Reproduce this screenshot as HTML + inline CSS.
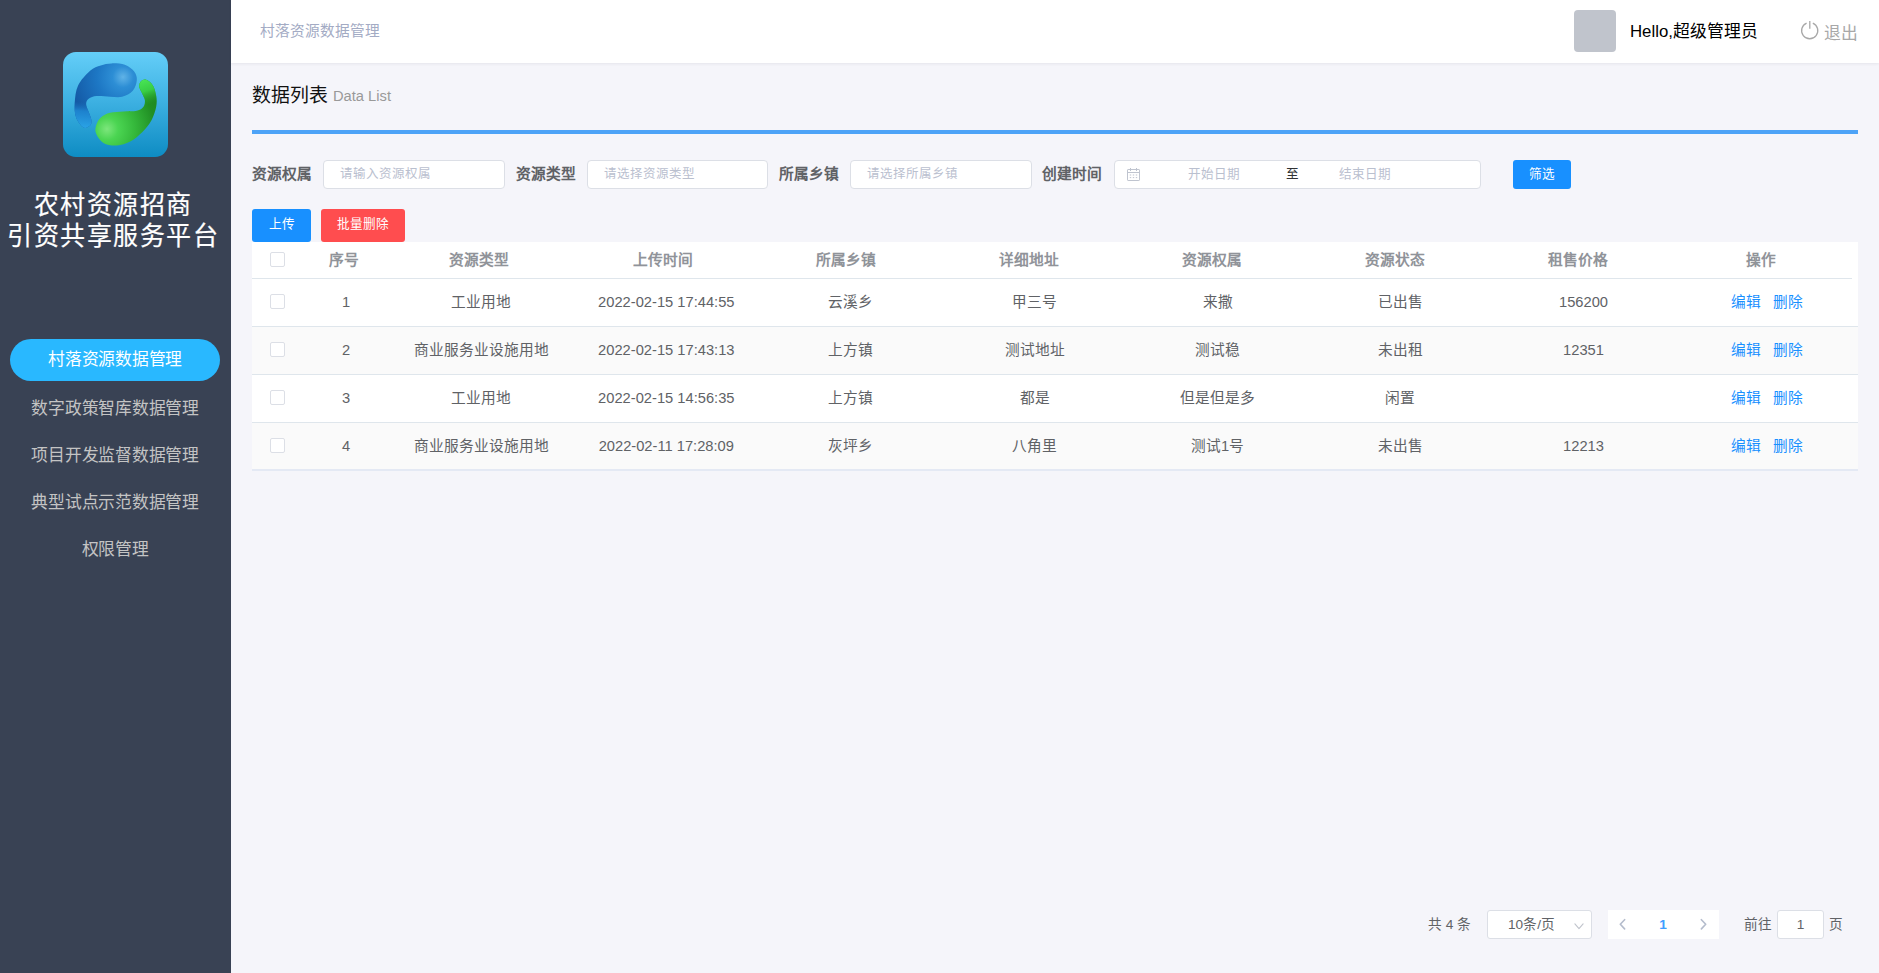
<!DOCTYPE html>
<html lang="zh-CN">
<head>
<meta charset="utf-8">
<title>农村资源招商引资共享服务平台</title>
<style>
*{box-sizing:border-box;}
html,body{margin:0;padding:0;}
body{width:1879px;height:973px;overflow:hidden;background:#f5f5fa;font-family:"Liberation Sans",sans-serif;color:#606266;position:relative;font-size:14.7px;}
.abs{position:absolute;white-space:nowrap;}

/* ---------- sidebar ---------- */
#side{position:absolute;left:0;top:0;width:231px;height:973px;background:#394254;}
#logo{position:absolute;left:63px;top:52px;width:105px;height:105px;}
.ttl{position:absolute;left:0;width:226px;text-align:center;color:#fff;font-size:25px;line-height:30px;letter-spacing:1.5px;white-space:nowrap;-webkit-text-stroke:.2px #fff;transform:scaleY(1.04);transform-origin:50% 55%;}
.mi{position:absolute;left:10px;width:210px;height:42px;line-height:42px;text-align:center;font-size:16.8px;letter-spacing:-.25px;color:#c4c4c4;white-space:nowrap;border-radius:21px;}
.mi.on{background:#29b8ff;color:#fff;}

/* ---------- header ---------- */
#head{position:absolute;left:231px;top:0;width:1648px;height:63px;background:#fff;box-shadow:0 1px 3px rgba(0,21,41,.07);}
#crumb{left:29px;top:0;line-height:62px;font-size:14.7px;color:#a3abc4;}
#avatar{left:1343px;top:10px;width:42px;height:42px;border-radius:4px;background:#c0c4cc;}
#hello{left:1399px;top:0;line-height:64px;font-size:16.8px;color:#000;}
#exit{left:1593px;top:0;line-height:67px;font-size:16.8px;color:#a8a8a8;}
#pwr{left:1569px;top:20px;width:20px;height:21px;}

/* ---------- title ---------- */
#h3{left:252px;top:83px;font-size:18.9px;line-height:26px;color:#111;}
#h3 span{font-size:14.7px;color:#999;margin-left:5px;position:relative;top:-1px;}
#bar{left:252px;top:130px;width:1606px;height:4px;background:#4da3f7;}

/* ---------- filter ---------- */
.lbl{top:160px;line-height:28px;font-size:14.7px;font-weight:bold;color:#606266;}
.inp{top:160px;height:29px;background:#fff;border:1px solid #dcdfe6;border-radius:4px;line-height:27px;font-size:12.5px;color:#bac0cf;padding-left:16px;}
.btn{color:#fff;font-size:12.6px;text-align:center;border-radius:3px;}
#cal{left:1126px;top:167px;width:15px;height:15px;}

/* ---------- table ---------- */
#tbl{left:252px;top:242px;width:1606px;height:229px;background:#fff;}
.row{position:absolute;left:0;width:1606px;height:48px;border-bottom:1px solid #dfe6ec;background:#fff;}
.row.st{background:#fafafa;}
#thead{position:absolute;left:0;top:0;width:1600px;height:37px;border-bottom:1px solid #dfe6ec;}
.c{position:absolute;top:0;text-align:center;white-space:nowrap;font-size:14.7px;color:#606266;}
.row .c{line-height:46px;}
#thead .c{line-height:36px;font-weight:bold;color:#909399;}
.ck{position:absolute;left:18px;width:15px;height:15px;border:1px solid #dcdfe6;border-radius:2px;background:#fff;}
.lk{color:#1890ff;}
.lk+.lk{margin-left:12px;}

/* ---------- pagination ---------- */
.pg{top:910px;height:29px;line-height:29px;font-size:13.65px;color:#606266;}
.pbox{background:#fff;border:1px solid #dcdfe6;border-radius:3px;line-height:27px;text-align:center;}
.chev{fill:none;stroke:#c0c4cc;stroke-width:1.3;stroke-linecap:round;stroke-linejoin:round;}
</style>
</head>
<body>

<!-- sidebar -->
<div id="side">
  <svg id="logo" viewBox="0 0 105 105">
    <defs>
      <linearGradient id="lg" x1="0" y1="0" x2="0" y2="1">
        <stop offset="0" stop-color="#64cef8"/>
        <stop offset=".45" stop-color="#3fb2e3"/>
        <stop offset="1" stop-color="#0e8cc3"/>
      </linearGradient>
      <radialGradient id="gb" gradientUnits="userSpaceOnUse" cx="60" cy="25" r="52">
        <stop offset="0" stop-color="#60b3e7"/>
        <stop offset=".2" stop-color="#2d8ed5"/>
        <stop offset=".5" stop-color="#1d77c4"/>
        <stop offset="1" stop-color="#145aa6"/>
      </radialGradient>
      <linearGradient id="gbt" gradientUnits="userSpaceOnUse" x1="22" y1="50" x2="20" y2="76">
        <stop offset="0" stop-color="#1a6fbb" stop-opacity="0"/>
        <stop offset=".35" stop-color="#1e86d2" stop-opacity=".9"/>
        <stop offset="1" stop-color="#2aa4e6"/>
      </linearGradient>
      <radialGradient id="gg" gradientUnits="userSpaceOnUse" cx="44" cy="77" r="56">
        <stop offset="0" stop-color="#7de67c"/>
        <stop offset=".2" stop-color="#4bd552"/>
        <stop offset=".5" stop-color="#35b83b"/>
        <stop offset=".85" stop-color="#218f24"/>
        <stop offset="1" stop-color="#1f8a22"/>
      </radialGradient>
      <linearGradient id="ggt" gradientUnits="userSpaceOnUse" x1="80" y1="28" x2="88" y2="52">
        <stop offset="0" stop-color="#48e455"/>
        <stop offset=".45" stop-color="#3dd94a" stop-opacity=".85"/>
        <stop offset="1" stop-color="#2aa52e" stop-opacity="0"/>
      </linearGradient>
      <clipPath id="cb"><path d="M48.5 11.4C52.5 11.3 58.0 11.4 61.8 12.7C65.6 14.1 69.2 16.8 71.2 19.4C73.2 22.0 74.1 24.9 73.8 28.1C73.6 31.3 72.3 36.0 69.8 38.8C67.4 41.6 62.9 43.8 59.1 44.8C55.4 45.8 51.4 44.9 47.1 44.8C42.9 44.7 37.3 43.8 33.8 44.1C30.2 44.4 27.5 45.4 25.7 46.8C24.0 48.1 23.1 49.9 23.1 52.1C23.1 54.4 24.9 57.5 25.7 60.1C26.6 62.8 28.2 65.9 28.4 68.2C28.6 70.4 28.4 72.3 27.1 73.5C25.7 74.7 22.7 76.8 20.4 75.5C18.1 74.2 14.5 69.6 13.1 65.5C11.6 61.4 11.4 56.1 11.7 50.8C12.1 45.4 12.5 38.8 15.1 33.4C17.6 28.1 23.3 22.1 27.1 18.7C30.9 15.4 34.2 14.6 37.8 13.4C41.3 12.2 44.4 11.5 48.5 11.4Z"/></clipPath>
      <clipPath id="cg"><path d="M83.2 27.8C85.2 28.5 88.2 30.7 89.9 33.4C91.5 36.1 92.7 40.5 93.2 44.1C93.8 47.7 94.0 50.8 93.2 54.8C92.4 58.8 90.9 63.9 88.5 68.2C86.2 72.4 82.7 76.6 79.2 80.2C75.6 83.7 71.4 87.3 67.2 89.5C62.9 91.8 58.3 93.3 53.8 93.5C49.3 93.8 43.9 92.9 40.4 90.9C37.0 88.9 34.3 84.4 33.1 81.5C31.9 78.6 32.3 76.2 33.1 73.5C33.9 70.8 35.4 67.6 37.8 65.5C40.1 63.4 43.3 61.8 47.1 60.8C50.9 59.8 56.0 59.8 60.5 59.5C64.9 59.1 70.5 59.6 73.8 58.8C77.2 58.0 79.2 56.6 80.5 54.8C81.9 53.0 82.1 50.3 81.9 48.1C81.6 45.9 80.1 43.7 79.2 41.4C78.2 39.2 76.5 36.8 76.2 34.8C76.0 32.8 76.7 30.6 77.8 29.4C79.0 28.3 81.2 27.1 83.2 27.8Z"/></clipPath>
    </defs>
    <rect x="0" y="0" width="105" height="105" rx="13" ry="13" fill="url(#lg)"/>
    <path d="M48.5 11.4C52.5 11.3 58.0 11.4 61.8 12.7C65.6 14.1 69.2 16.8 71.2 19.4C73.2 22.0 74.1 24.9 73.8 28.1C73.6 31.3 72.3 36.0 69.8 38.8C67.4 41.6 62.9 43.8 59.1 44.8C55.4 45.8 51.4 44.9 47.1 44.8C42.9 44.7 37.3 43.8 33.8 44.1C30.2 44.4 27.5 45.4 25.7 46.8C24.0 48.1 23.1 49.9 23.1 52.1C23.1 54.4 24.9 57.5 25.7 60.1C26.6 62.8 28.2 65.9 28.4 68.2C28.6 70.4 28.4 72.3 27.1 73.5C25.7 74.7 22.7 76.8 20.4 75.5C18.1 74.2 14.5 69.6 13.1 65.5C11.6 61.4 11.4 56.1 11.7 50.8C12.1 45.4 12.5 38.8 15.1 33.4C17.6 28.1 23.3 22.1 27.1 18.7C30.9 15.4 34.2 14.6 37.8 13.4C41.3 12.2 44.4 11.5 48.5 11.4Z" fill="url(#gb)"/>
    <rect clip-path="url(#cb)" x="8" y="48" width="24" height="30" fill="url(#gbt)"/>
    <path d="M83.2 27.8C85.2 28.5 88.2 30.7 89.9 33.4C91.5 36.1 92.7 40.5 93.2 44.1C93.8 47.7 94.0 50.8 93.2 54.8C92.4 58.8 90.9 63.9 88.5 68.2C86.2 72.4 82.7 76.6 79.2 80.2C75.6 83.7 71.4 87.3 67.2 89.5C62.9 91.8 58.3 93.3 53.8 93.5C49.3 93.8 43.9 92.9 40.4 90.9C37.0 88.9 34.3 84.4 33.1 81.5C31.9 78.6 32.3 76.2 33.1 73.5C33.9 70.8 35.4 67.6 37.8 65.5C40.1 63.4 43.3 61.8 47.1 60.8C50.9 59.8 56.0 59.8 60.5 59.5C64.9 59.1 70.5 59.6 73.8 58.8C77.2 58.0 79.2 56.6 80.5 54.8C81.9 53.0 82.1 50.3 81.9 48.1C81.6 45.9 80.1 43.7 79.2 41.4C78.2 39.2 76.5 36.8 76.2 34.8C76.0 32.8 76.7 30.6 77.8 29.4C79.0 28.3 81.2 27.1 83.2 27.8Z" fill="url(#gg)"/>
    <rect clip-path="url(#cg)" x="74" y="26" width="22" height="30" fill="url(#ggt)"/>
  </svg>
  <div class="ttl" style="top:190px;">农村资源招商</div>
  <div class="ttl" style="top:221px;">引资共享服务平台</div>

  <div class="mi on" style="top:339px;">村落资源数据管理</div>
  <div class="mi" style="top:387.5px;">数字政策智库数据管理</div>
  <div class="mi" style="top:434.5px;">项目开发监督数据管理</div>
  <div class="mi" style="top:481.5px;">典型试点示范数据管理</div>
  <div class="mi" style="top:528.5px;">权限管理</div>
</div>

<!-- header -->
<div id="head">
  <div id="crumb" class="abs">村落资源数据管理</div>
  <div id="avatar" class="abs"></div>
  <div id="hello" class="abs">Hello,超级管理员</div>
  <svg id="pwr" class="abs" viewBox="0 0 20 21" fill="none" stroke="#a8a8a8" stroke-width="1.3">
    <path d="M6.6 3.15A8.1 8.1 0 1 0 12.8 3.15"/>
    <path d="M9.8 1V8.8"/>
  </svg>
  <div id="exit" class="abs">退出</div>
</div>

<!-- title -->
<div id="h3" class="abs">数据列表<span>Data List</span></div>
<div id="bar" class="abs"></div>

<!-- filter -->
<div class="abs lbl" style="left:252px;">资源权属</div>
<div class="abs inp" style="left:323px;width:182px;">请输入资源权属</div>
<div class="abs lbl" style="left:516px;">资源类型</div>
<div class="abs inp" style="left:587px;width:181px;">请选择资源类型</div>
<div class="abs lbl" style="left:779px;">所属乡镇</div>
<div class="abs inp" style="left:850px;width:182px;">请选择所属乡镇</div>
<div class="abs lbl" style="left:1042px;">创建时间</div>
<div class="abs inp" style="left:1114px;width:367px;padding-left:0;font-size:12.6px;">
  <span class="abs" style="left:73px;top:0;">开始日期</span>
  <span class="abs" style="left:171px;top:0;color:#303133;">至</span>
  <span class="abs" style="left:224px;top:0;">结束日期</span>
</div>
<svg id="cal" class="abs" viewBox="0 0 15 15" fill="none" stroke="#bfc4cf" stroke-width="1">
  <rect x="1.5" y="2.5" width="12" height="11" rx=".6"/>
  <path d="M1.5 5.5H13.5M4.5 1V4M10.5 1V4M3.8 8H5.2M6.8 8H8.2M9.8 8H11.2M3.8 10.6H5.2M6.8 10.6H8.2M9.8 10.6H11.2"/>
</svg>
<div class="abs btn" style="left:1513px;top:160px;width:58px;height:29px;line-height:28px;background:#1890ff;">筛选</div>
<div class="abs btn" style="left:252px;top:209px;width:59px;height:33px;line-height:31px;background:#1890ff;">上传</div>
<div class="abs btn" style="left:321px;top:209px;width:84px;height:33px;line-height:31px;background:#ff4d4f;">批量删除</div>

<!-- table -->
<div id="tbl" class="abs">
 <div id="thead">
  <i class="ck" style="top:10px;"></i>
  <div class="c" style="left:52.1px;width:80px;">序号</div>
  <div class="c" style="left:146.6px;width:160px;">资源类型</div>
  <div class="c" style="left:330.75px;width:160px;">上传时间</div>
  <div class="c" style="left:513.8px;width:160px;">所属乡镇</div>
  <div class="c" style="left:696.8px;width:160px;">详细地址</div>
  <div class="c" style="left:879.5px;width:160px;">资源权属</div>
  <div class="c" style="left:1062.7px;width:160px;">资源状态</div>
  <div class="c" style="left:1245.9px;width:160px;">租售价格</div>
  <div class="c" style="left:1428.9px;width:160px;">操作</div>
 </div>
 <div class="row" style="top:37px;">
  <i class="ck" style="top:15px;"></i>
  <div class="c" style="left:54px;width:80px;">1</div>
  <div class="c" style="left:139.1px;width:180px;">工业用地</div>
  <div class="c" style="left:324.3px;width:180px;">2022-02-15 17:44:55</div>
  <div class="c" style="left:508.2px;width:180px;">云溪乡</div>
  <div class="c" style="left:692.5px;width:180px;">甲三号</div>
  <div class="c" style="left:875.6px;width:180px;">来撒</div>
  <div class="c" style="left:1058.2px;width:180px;">已出售</div>
  <div class="c" style="left:1241.5px;width:180px;">156200</div>
  <div class="c" style="left:1424.9px;width:180px;"><span class="lk">编辑</span><span class="lk">删除</span></div>
 </div>
 <div class="row st" style="top:85px;">
  <i class="ck" style="top:15px;"></i>
  <div class="c" style="left:54px;width:80px;">2</div>
  <div class="c" style="left:139.1px;width:180px;">商业服务业设施用地</div>
  <div class="c" style="left:324.3px;width:180px;">2022-02-15 17:43:13</div>
  <div class="c" style="left:508.2px;width:180px;">上方镇</div>
  <div class="c" style="left:692.5px;width:180px;">测试地址</div>
  <div class="c" style="left:875.6px;width:180px;">测试稳</div>
  <div class="c" style="left:1058.2px;width:180px;">未出租</div>
  <div class="c" style="left:1241.5px;width:180px;">12351</div>
  <div class="c" style="left:1424.9px;width:180px;"><span class="lk">编辑</span><span class="lk">删除</span></div>
 </div>
 <div class="row" style="top:133px;">
  <i class="ck" style="top:15px;"></i>
  <div class="c" style="left:54px;width:80px;">3</div>
  <div class="c" style="left:139.1px;width:180px;">工业用地</div>
  <div class="c" style="left:324.3px;width:180px;">2022-02-15 14:56:35</div>
  <div class="c" style="left:508.2px;width:180px;">上方镇</div>
  <div class="c" style="left:692.5px;width:180px;">都是</div>
  <div class="c" style="left:875.6px;width:180px;">但是但是多</div>
  <div class="c" style="left:1058.2px;width:180px;">闲置</div>
  <div class="c" style="left:1241.5px;width:180px;"></div>
  <div class="c" style="left:1424.9px;width:180px;"><span class="lk">编辑</span><span class="lk">删除</span></div>
 </div>
 <div class="row st" style="top:181px;">
  <i class="ck" style="top:15px;"></i>
  <div class="c" style="left:54px;width:80px;">4</div>
  <div class="c" style="left:139.1px;width:180px;">商业服务业设施用地</div>
  <div class="c" style="left:324.3px;width:180px;">2022-02-11 17:28:09</div>
  <div class="c" style="left:508.2px;width:180px;">灰坪乡</div>
  <div class="c" style="left:692.5px;width:180px;">八角里</div>
  <div class="c" style="left:875.6px;width:180px;">测试1号</div>
  <div class="c" style="left:1058.2px;width:180px;">未出售</div>
  <div class="c" style="left:1241.5px;width:180px;">12213</div>
  <div class="c" style="left:1424.9px;width:180px;"><span class="lk">编辑</span><span class="lk">删除</span></div>
 </div>
 <div style="position:absolute;left:0;top:227px;width:1606px;height:2px;background:#e4e9f4;"></div>
</div>

<!-- pagination -->
<div class="abs pg" style="left:1428px;">共 4 条</div>
<div class="abs pg pbox" style="left:1487px;width:105px;text-align:left;padding-left:20px;">10条/页</div>
<svg class="abs chev" style="left:1574px;top:922px;width:10px;height:8px;stroke-width:1.1;" viewBox="0 0 10 8"><path d="M.9 1.8L5 6.6L9.1 1.8"/></svg>
<div class="abs pg" style="left:1608px;width:111px;background:#fff;"></div>
<svg class="abs chev" style="left:1618px;top:918px;width:8px;height:12px;stroke-width:1.6;stroke:#b4bccc;" viewBox="0 0 8 12"><path d="M6.6 1.7L2.3 6.3L6.6 10.9"/></svg>
<div class="abs pg" style="left:1653px;width:20px;text-align:center;color:#409eff;font-weight:bold;">1</div>
<svg class="abs chev" style="left:1700px;top:918px;width:8px;height:12px;stroke-width:1.6;stroke:#b4bccc;" viewBox="0 0 8 12"><path d="M1.4 1.7L5.7 6.3L1.4 10.9"/></svg>
<div class="abs pg" style="left:1744px;">前往</div>
<div class="abs pg pbox" style="left:1777px;width:47px;">1</div>
<div class="abs pg" style="left:1829px;">页</div>
</body>
</html>
